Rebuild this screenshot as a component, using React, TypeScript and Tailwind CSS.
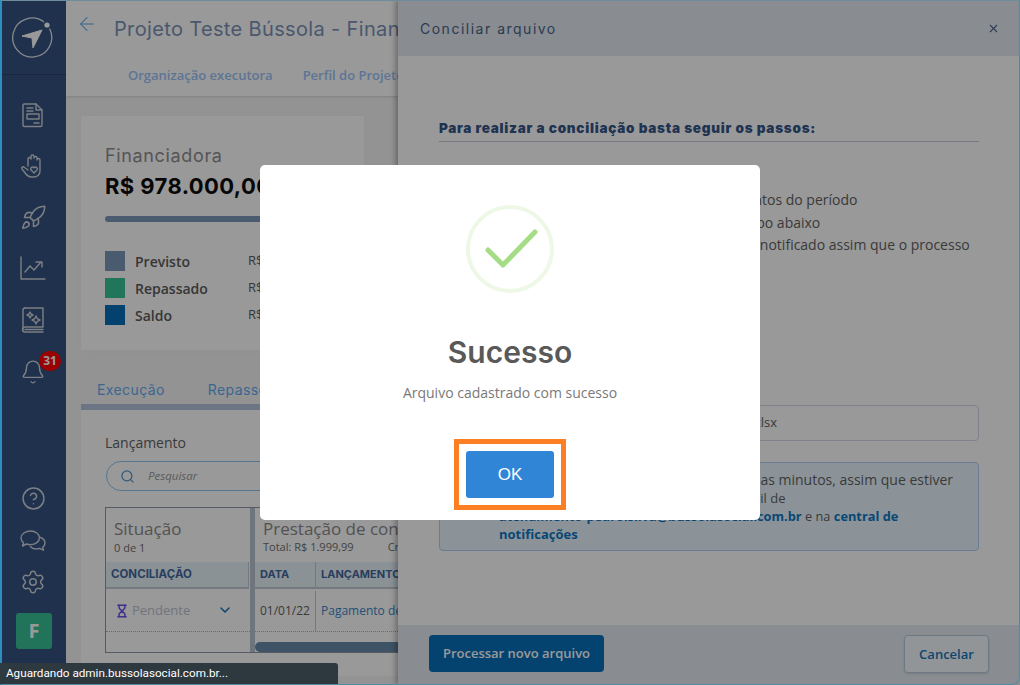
import React from 'react';
import { ArrowLeft, Bell, ChevronDown, CircleHelp, Hourglass, Rocket, Search, Settings, X } from 'lucide-react';

const heading = "font-['Inter',sans-serif]";

const legend = [
  { label: 'Previsto', color: 'bg-[#7c96ba]' },
  { label: 'Repassado', color: 'bg-[#36c396]' },
  { label: 'Saldo', color: 'bg-[#056eb9]' },
];

const Logo = () => (
  <svg width="42" height="42" viewBox="0 0 42 42" fill="none" className="-ml-[2px]">
    <path d="M33 6A19.500 19.500 0 1 0 38.500 12.500" stroke="#fff" strokeWidth="1.300" opacity="0.85" />
    <circle cx="36" cy="9" r="2.600" fill="#fff" />
    <path d="M11 20 31 14 22 32 21 22z" fill="#fff" stroke="#fff" strokeWidth="1" strokeLinejoin="round" />
  </svg>
);

const IconProps = { width: 28, height: 28, viewBox: '0 0 28 28', fill: 'none', stroke: '#cfd4da', strokeWidth: 1.4, strokeLinecap: 'round', strokeLinejoin: 'round' } as const;

const DocIcon = () => (
  <svg {...IconProps}>
    <path d="M5 3h12l6 6v15a1.500 1.500 0 0 1-1.500 1.500h-16A1.500 1.500 0 0 1 4 24V4a1 1 0 0 1 1-1z" />
    <path d="M17 3v6h6M8 7h6M8 10h6" />
    <rect x="8" y="13" width="12" height="5" />
    <path d="M15 22h5" />
  </svg>
);

const HandIcon = () => (
  <svg {...IconProps}>
    <path d="M9 14V7a1.500 1.500 0 0 1 3 0V4.500a1.500 1.500 0 0 1 3 0V6a1.500 1.500 0 0 1 3 0v2a1.500 1.500 0 0 1 3 0v11a6 6 0 0 1-6 6h-3c-2.500 0-4-1.500-5.500-3.500L3 17c-1-1.500 1-3 2.500-1.500L9 18" />
    <path d="M15 21l-3.200-3.200a1.900 1.900 0 0 1 3.200-2 1.900 1.900 0 0 1 3.200 2z" />
  </svg>
);

const ChartIcon = () => (
  <svg {...IconProps}>
    <path d="M2 3v22h24" />
    <path d="M6 18l5-6 4 4 7-8M17 8h6v5" />
  </svg>
);

const BookIcon = () => (
  <svg {...IconProps}>
    <path d="M6 3h18v19H6a2.500 2.500 0 0 0 0 5h18" />
    <path d="M4 24.500V5a2 2 0 0 1 2-2M6 24.500h18" />
    <path d="M11 7l1 2 2 1-2 1-1 2-1-2-2-1 2-1zM17 11l1.300 2.700L21 15l-2.700 1.300L17 19l-1.300-2.700L13 15l2.700-1.300z" />
  </svg>
);

const ChatIcon = () => (
  <svg {...IconProps} viewBox="0 0 28 28">
    <path d="M11.500 4C6.500 4 2 7 2 11c0 2 1 3.500 2.500 4.700L3.500 19l4-2c1.300.4 2.600.6 4 .6 5 0 9-3 9-6.800S16.500 4 11.500 4z" />
    <path d="M21.500 10.500c2.700 1 4.500 3 4.500 5.500 0 1.700-1 3.200-2.300 4.200l.8 3-3.800-1.800c-1.200.3-2.200.5-3.400.5-2.500 0-4.800-1-6-2.600" />
  </svg>
);

const navTop = [
  <DocIcon key="doc" />,
  <HandIcon key="hand" />,
  <Rocket key="rocket" size={27} strokeWidth={1.4} color="#cfd4da" />,
  <ChartIcon key="chart" />,
  <BookIcon key="book" />,
];

const Sidebar = () => (
  <aside className="w-[66px] h-full shrink-0 bg-[#345280] flex flex-col items-center">
    <div className="w-full h-[75px] shrink-0 flex items-center justify-center border-b border-[#2a4468]">
      <Logo />
    </div>
    <div className="flex flex-col items-center gap-[23px] mt-[26px]">
      {navTop.map((icon, i) => (
        <div key={i} className="w-7 h-7 flex items-center justify-center">{icon}</div>
      ))}
      <div className="relative w-7 h-7 mt-[2px] flex items-center justify-center">
        <Bell size={26} strokeWidth={1.3} color="#cfd4da" />
        <span className="absolute -top-[7px] left-[20px] w-[22px] h-[20px] rounded-full bg-[#ff0000] text-white text-[12px] font-bold font-['Open_Sans',sans-serif] flex items-center justify-center">31</span>
      </div>
    </div>
    <div className="mt-auto flex flex-col items-center">
      <CircleHelp size={25} strokeWidth={1.4} color="#cfd4da" />
      <div className="mt-[16px]"><ChatIcon /></div>
      <Settings size={26} strokeWidth={1.4} color="#cfd4da" className="mt-[14px]" />
      <div className="mt-[18px] mb-[36px] ml-[2px] w-9 h-9 rounded-[3px] bg-[#37c196] text-white font-bold text-[20px] font-['Open_Sans',sans-serif] flex items-center justify-center">F</div>
    </div>
  </aside>
);

const Main = () => (
  <main className="flex-1 h-full bg-[#f6f6f6] overflow-hidden font-['Open_Sans',sans-serif]">
    <header className="h-[96px] bg-white shadow-sm relative">
      <div className="flex items-center h-[58px] pl-[10px]">
        <ArrowLeft size={22} strokeWidth={1.100} color="#5ba5ee" className="-mt-[10px]" />
        <h1 className={`${heading} ml-[16px] text-[20px] tracking-[0.35px] text-[#7c93b8] whitespace-nowrap`}>Projeto Teste Bússola - Financiamento</h1>
      </div>
      <nav className="flex gap-[30px] pl-[62px] pt-[8px] text-[13px] font-semibold text-[#9bc4f8] whitespace-nowrap">
        <span>Organização executora</span>
        <span>Perfil do Projeto</span>
      </nav>
    </header>

    <section className="ml-[15px] mt-[20px] w-[283px] h-[234px] bg-white pl-[24px] pt-[29px] shadow-[0_0_10px_rgba(0,0,0,0.03)] overflow-hidden">
      <div className={`${heading} text-[18px] leading-[22px] text-[#8e8e8e] tracking-[0.65px]`}>Financiadora</div>
      <div className={`${heading} mt-[7px] text-[22px] leading-[24px] font-bold text-[#0d0d0d] tracking-[0.4px] whitespace-nowrap`}>R$ 978.000,00</div>
      <div className="mt-[18px] h-[6px] rounded-full bg-[#7c96ba]" />
      <ul className="mt-[29px] flex flex-col gap-[7px]">
        {legend.map((l) => (
          <li key={l.label} className="flex items-center h-5">
            <span className={`w-5 h-5 ${l.color}`} />
            <span className="ml-[10px] w-[113px] text-[14px] font-semibold text-[#5a5a5a]">{l.label}</span>
            <span className="text-[13px] text-[#5a5a5a]">R$ 0,00</span>
          </li>
        ))}
      </ul>
    </section>

    <div className="ml-[15px] mt-[26px] h-[300px] bg-white">
      <div className="flex gap-[43px] pl-[16px] h-[34px] pt-[3px] bg-[#f6f6f6] border-b-[6px] border-[#b4c4da] text-[14px] text-[#62abf2] whitespace-nowrap">
        <span className={`${heading} tracking-[0.4px]`}>Execução</span>
        <span className={`${heading} tracking-[0.4px]`}>Repasses</span>
      </div>

      <section className="ml-[24px] pt-[23px]">
        <div className="text-[14px] leading-[19px] text-[#5f5f5f]">Lançamento</div>
        <div className="mt-[9px] ml-[1px] w-[300px] h-[30px] rounded-full border border-[#8fc5ee] flex items-center pl-[13px] gap-[13px]">
          <Search size={15} color="#4d94cc" />
          <span className="text-[11.500px] italic text-[#9a9a9a]">Pesquisar</span>
        </div>

        <div className="mt-[16px] w-[320px] h-[146px] border border-[#8e98a4] flex overflow-hidden">
          <div className="w-[144px] shrink-0 flex flex-col">
            <div className="h-[54px] pl-[8px] pt-[9px]">
              <div className="text-[17px] leading-[23px] text-[#8a8a8a]">Situação</div>
              <div className="text-[11px] leading-[15px] text-[#6f6f6f]">0 de 1</div>
            </div>
            <div className="h-[27px] pl-[5px] mr-[1px] bg-[#e6f3fb] border-b-2 border-r border-[#c0cad4] flex items-center">
              <span className={`${heading} text-[11.500px] font-bold text-[#47689c]`}>CONCILIAÇÃO</span>
            </div>
            <div className="h-[43px] border-b border-dotted border-[#a9b2c8] flex items-center pl-[9px] pr-[17px] pt-[2px]">
              <Hourglass size={14} strokeWidth={2.600} color="#6a50e8" />
              <span className="ml-[3px] text-[13px] text-[#bcc2d0]">Pendente</span>
              <ChevronDown size={16} strokeWidth={2.400} color="#1477bb" className="ml-auto -mt-[2px]" />
            </div>
          </div>
          <div className="w-[5px] shrink-0 bg-[#b8c4d0]" />
          <div className="flex-1 flex flex-col min-w-0">
            <div className="h-[54px] pl-[8px] pt-[9px]">
              <div className="text-[17px] leading-[23px] text-[#8a8a8a] whitespace-nowrap">Prestação de contas</div>
              <div className="text-[11px] leading-[13px] text-[#6f6f6f] whitespace-nowrap">Total: R$ 1.999,99<span className="ml-[34px]">Crédito</span></div>
            </div>
            <div className="h-[27px] bg-[#e6f3fb] border-b-2 border-[#c0cad4] flex items-center">
              <span className={`${heading} w-[61px] pl-[5px] h-full flex items-center border-r border-[#c0cad4] text-[11px] font-bold text-[#47689c]`}>DATA</span>
              <span className={`${heading} pl-[5px] text-[11px] font-bold text-[#47689c] whitespace-nowrap`}>LANÇAMENTO</span>
            </div>
            <div className="h-[43px] border-b border-dotted border-[#a9b2c8] flex items-center text-[12px] pt-[2px]">
              <span className="w-[61px] h-full pl-[5px] flex items-center border-r border-[#c0cad4] text-[#5f5f5f]">01/01/22</span>
              <span className="pl-[5px] text-[#3a86c8] whitespace-nowrap">Pagamento de</span>
            </div>
            <div className="mt-[10px] h-[10px] rounded-full bg-[#688ba8]" />
          </div>
        </div>
      </section>
    </div>
  </main>
);

const Drawer = () => (
  <aside className="absolute top-0 right-0 bottom-0 w-[622px] bg-white shadow-[-2px_0_6px_rgba(0,0,0,0.35)] flex flex-col font-['Open_Sans',sans-serif]">
    <header className="h-[56px] shrink-0 bg-[#e4ecf2] flex items-center justify-between pl-[22px] pr-[20px]">
      <span className={`${heading} text-[14px] tracking-[1.500px] text-[#4a6388]`}>Conciliar arquivo</span>
      <X size={13} color="#4a6388" />
    </header>
    <div className="flex-1 px-[41px] min-h-0">
      <h2 className={`${heading} mt-[64px] pb-[4px] text-[13.500px] leading-[17px] tracking-[0.74px] font-black text-[#345589] border-b border-[#c6c8dc] whitespace-nowrap`}>Para realizar a conciliação basta seguir os passos:</h2>
      <ol className="mt-[47px] pl-[12px] text-[14px] leading-[22.500px] text-[#626262]">
        <li className="whitespace-nowrap">1. Baixe o modelo e preencha com os lançamentos do período</li>
        <li className="whitespace-nowrap">2. Selecione a planilha final preenchida no campo abaixo</li>
        <li className="whitespace-nowrap">3. Clique em processar seu arquivo e você será notificado assim que o processo</li>
      </ol>
      <div className="mt-[148px] h-[36px] border border-[#d4d8ea] rounded-[4px] flex items-center pl-[12px] text-[13px] text-[#626262] whitespace-nowrap">conciliacao-financeira-modelo-projeto-bussola-v2.xlsx</div>
      <div className="mt-[21px] h-[89px] bg-[#e8f6ff] border border-[#b0cff5] rounded-[4px] pl-[59px] pt-[8px] text-[14px] leading-[18px] text-[#626262]">
        <p className="whitespace-nowrap">O processamento total pode levar algunas minutos, assim que estiver</p>
        <p className="whitespace-nowrap text-[13px]">concluído você será notificado no seu e-mail de</p>
        <p className="whitespace-nowrap text-[12.800px]"><b className="text-[#0f78c4]">atendimento-pedro.silva@bussolasocial.com.br</b> e na <b className="text-[#0f78c4]">central de</b></p>
        <p className="whitespace-nowrap text-[13px]"><b className="text-[#0f78c4]">notificações</b></p>
      </div>
    </div>
    <footer className="h-[60px] shrink-0 bg-[#e4ecf2] flex items-start justify-between pl-[31px] pr-[31px] pt-[10px]">
      <button className="w-[175px] h-[37px] rounded-[4px] bg-[#076eb9] text-white text-[13px] font-semibold">Processar novo arquivo</button>
      <button className="w-[85px] h-[38px] pt-[1px] rounded-[4px] bg-[#f4f8fc] border border-[#b4cce0] shadow-sm text-[#1376bb] text-[13px] font-semibold">Cancelar</button>
    </footer>
  </aside>
);

const SuccessDialog = () => (
  <div className="absolute inset-0 bg-black/40 flex items-center justify-center">
    <div className="w-[500px] h-[355px] bg-white rounded-[5px] flex flex-col items-center pt-[40px]">
      <svg width="88" height="88" viewBox="0 0 88 88" fill="none">
        <circle cx="44" cy="44" r="42" stroke="#edf8e7" strokeWidth="4" />
        <path d="M22 45l15 15 32-33" stroke="#a5dc86" strokeWidth="5" strokeLinecap="round" strokeLinejoin="round" />
      </svg>
      <h3 className={`${heading} mt-[41px] text-[30px] leading-[36px] font-semibold text-[#595959]`}>Sucesso</h3>
      <p className="mt-[13px] text-[14px] leading-[20px] text-[#797979] font-['Open_Sans',sans-serif]">Arquivo cadastrado com sucesso</p>
      <div className="mt-[36px] border-[5px] border-[#fd7f23] p-[7px]">
        <button className="block w-[88px] h-[47px] rounded-[3px] bg-[#3085d6] text-white text-[17px] font-['Liberation_Sans',sans-serif]">OK</button>
      </div>
    </div>
  </div>
);

const App: React.FC = () => {
  return (
    <div className="relative w-[1020px] h-[685px] overflow-hidden flex">
      <Sidebar />
      <Main />
      <Drawer />
      <SuccessDialog />
      {/* window edge + browser status bubble sit over the page */}
      <div className="absolute inset-0 pointer-events-none border border-[#4f8ba3] border-t-[#6f8c9c] border-l-2 border-l-[#2d8fc0] rounded-br-[8px]" />
      <div className="absolute left-0 bottom-[1px] w-[338px] h-[21px] bg-[#2d383f] rounded-tr-[3px] text-white text-[11.700px] leading-[21px] pl-[6px] font-['Roboto',sans-serif]">
        Aguardando admin.bussolasocial.com.br...
      </div>
    </div>
  );
};

export default App;
